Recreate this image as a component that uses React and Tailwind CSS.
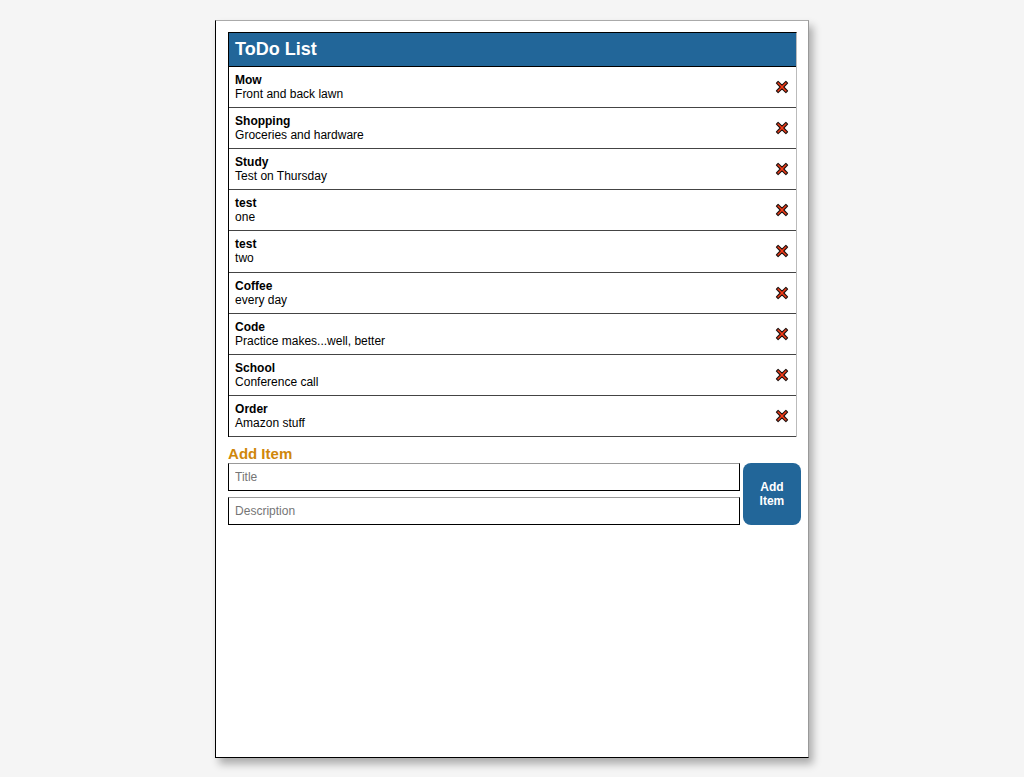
import { useState } from "react";

const initialItems = [
	{ id: 1, title: "Mow", description: "Front and back lawn" },
	{ id: 2, title: "Shopping", description: "Groceries and hardware" },
	{ id: 3, title: "Study", description: "Test on Thursday" },
	{ id: 4, title: "test", description: "one" },
	{ id: 5, title: "test", description: "two" },
	{ id: 6, title: "Coffee", description: "every day" },
	{ id: 7, title: "Code", description: "Practice makes...well, better" },
	{ id: 8, title: "School", description: "Conference call" },
	{ id: 9, title: "Order", description: "Amazon stuff" },
];

const DeleteIcon = () => (
	<svg viewBox="0 0 14 14" className="h-3.5 w-3.5" aria-hidden="true">
		<path
			d="M1.4 3.1L3.1 1.4L7 5.2L10.9 1.4L12.6 3.1L8.8 7L12.6 10.9L10.9 12.6L7 8.8L3.1 12.6L1.4 10.9L5.2 7Z"
			fill="#f83a16"
			stroke="#1c120f"
			strokeWidth="1.1"
			strokeLinejoin="round"
		/>
	</svg>
);

const TodoItem = ({ item, onDelete }) => (
	<li className="flex items-center justify-between border-b border-[#444] pl-1.5 pr-[7px]">
		<div className="py-1.5 text-[12px] leading-[14px]">
			<h2 className="font-bold">{item.title}</h2>
			<p>{item.description}</p>
		</div>
		<button type="button" aria-label={`Delete ${item.title}`} onClick={() => onDelete(item.id)}>
			<DeleteIcon />
		</button>
	</li>
);

const AddItemForm = ({ onAdd }) => {
	const [title, setTitle] = useState("");
	const [description, setDescription] = useState("");

	const handleSubmit = (e) => {
		e.preventDefault();
		if (!title) return;
		onAdd(title, description);
		setTitle("");
		setDescription("");
	};

	return (
		<form onSubmit={handleSubmit} className="-mr-1 flex gap-[3px]">
			<div className="flex grow flex-col gap-1.5">
				<input
					type="text"
					aria-label="Title"
					placeholder="Title"
					value={title}
					onChange={(e) => setTitle(e.target.value)}
					className="h-7 w-full border border-black border-t-[#999] px-1.5 text-[12px] placeholder:text-[#757575]"
				/>
				<input
					type="text"
					aria-label="Description"
					placeholder="Description"
					value={description}
					onChange={(e) => setDescription(e.target.value)}
					className="h-7 w-full border border-black border-t-[#999] px-1.5 text-[12px] placeholder:text-[#757575]"
				/>
			</div>
			<button
				type="submit"
				className="w-[58px] rounded-lg bg-[#226699] px-3 text-[12px] leading-[14px] font-bold text-white"
			>
				Add Item
			</button>
		</form>
	);
};

const App = () => {
	const [items, setItems] = useState(initialItems);

	const handleDelete = (id) => setItems(items.filter((item) => item.id !== id));

	const handleAdd = (title, description) =>
		setItems([...items, { id: Date.now(), title, description }]);

	return (
		<div className="flow-root min-h-screen bg-[#f5f5f5] font-['Liberation_Sans',Arial,sans-serif] text-black">
			<main className="mx-auto mt-5 min-h-[95vh] w-[58%] border border-black border-t-[#aaa] border-r-[#999] bg-white pt-[11px] pr-[11px] pl-3 shadow-[4px_6px_8px_rgba(0,0,0,0.3)]">
				<section className="border border-b-0 border-black border-r-[#bbb]">
					<h1 className="border-b border-black bg-[#226699] px-1.5 py-1 text-[18px] leading-[25px] font-bold text-white">
						ToDo List
					</h1>
					<ul className="grid min-h-[370px] auto-rows-fr">
						{items.map((item) => (
							<TodoItem key={item.id} item={item} onDelete={handleDelete} />
						))}
					</ul>
				</section>
				<h2 className="mt-2 text-[15px] leading-[18px] font-bold text-[#d0870a]">Add Item</h2>
				<AddItemForm onAdd={handleAdd} />
			</main>
		</div>
	);
};

export default App;
